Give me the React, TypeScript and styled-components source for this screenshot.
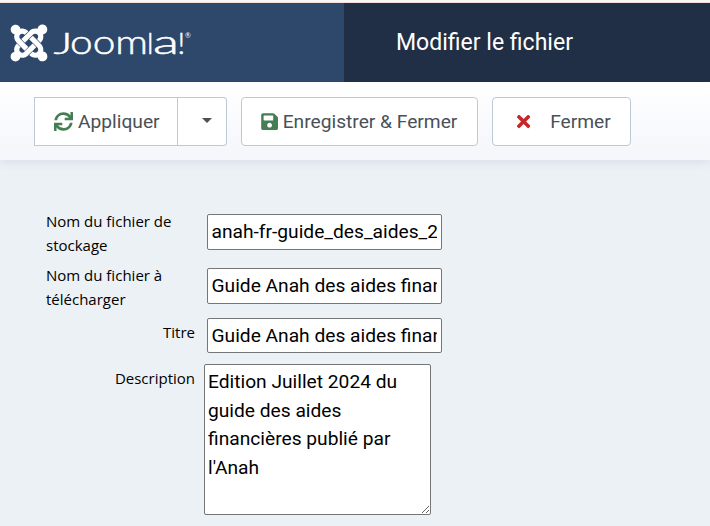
import React from "react";
import styled, { createGlobalStyle } from "styled-components";
import { FaJoomla, FaSync, FaSave, FaTimes } from "react-icons/fa";

const GlobalStyle = createGlobalStyle`
  * { box-sizing: border-box; }
  body {
    margin: 0;
    background: #ecf1f5;
    font-family: Roboto, "Liberation Sans", sans-serif;
    overflow: hidden;
  }
`;

const Page = styled.div`
  height: 526px;
  overflow: hidden;
  border-top: 2px solid #f8f8f8;
`;

const Header = styled.header`
  display: flex;
  height: 80px;
  border-top: 1px solid #f6dcdb;
  background: #212f46;
`;

const Brand = styled.div`
  display: flex;
  align-items: flex-start;
  width: 344px;
  padding: 19px 0 0 9px;
  background: #2e486b;
  color: #fff;
`;

const Mark = styled(FaJoomla)`
  width: 40px;
  height: 42px;
`;

const Wordmark = styled.svg`
  width: 145px;
  height: 42px;
  font-family: Lato, sans-serif;
  font-weight: 300;
  fill: #fff;
  overflow: visible;
`;

const Title = styled.h1`
  margin: 0;
  padding: 0 0 0 52px;
  font-size: 23.04px;
  font-weight: 400;
  line-height: 80px;
  color: #fff;
`;

const Toolbar = styled.div`
  display: flex;
  align-items: flex-start;
  gap: 14px;
  height: 78px;
  padding: 15px 34px;
  background: linear-gradient(#fff, #f4f6fb);
  box-shadow: 0 2px 10px rgba(40, 80, 130, 0.11);
`;

const Group = styled.div`
  display: flex;
`;

const Button = styled.button<{ $w: number; $gap: number; $pad: number; $radius?: string }>`
  display: flex;
  flex: none;
  align-items: center;
  gap: ${(p) => p.$gap}px;
  width: ${(p) => p.$w}px;
  height: 49px;
  padding: 0 0 0 ${(p) => p.$pad}px;
  border: 1px solid #bfc8d8;
  border-radius: ${(p) => p.$radius ?? "4px"};
  background: #fff;
  color: #495057;
  font: 400 19.2px Roboto, sans-serif;
  white-space: nowrap;
  svg { flex: none; }
`;

const SplitToggle = styled(Button)`
  border-left: 0;
`;

const Caret = styled.span`
  margin-bottom: 2px;
  border: 5px solid transparent;
  border-top-color: #495057;
  border-bottom: 0;
`;

const Form = styled.form`
  display: grid;
  grid-template-columns: 149px 235px;
  grid-template-rows: 54px 54px 46px 152px;
  column-gap: 12px;
  padding: 50px 0 0 46px;
`;

const Label = styled.label<{ $right?: boolean }>`
  margin-top: ${(p) => (p.$right ? 2 : -1)}px;
  font: 400 15px/24px "Open Sans", "Noto Sans", sans-serif;
  text-align: ${(p) => (p.$right ? "right" : "left")};
  color: #000;
  white-space: nowrap;
`;

const LabelText = styled.span`
  display: block;
`;

const Input = styled.input<{ $top?: number; $h?: number }>`
  width: 235px;
  height: ${(p) => p.$h ?? 36}px;
  margin-top: ${(p) => p.$top ?? 4}px;
  padding: 0 4px ${(p) => (p.$h ? 0 : 2)}px 3.5px;
  border: 1px solid #767676;
  border-radius: 2px;
  background: #fff;
  color: #000;
  font: 400 19.2px Roboto, sans-serif;
`;

const TextArea = styled.textarea`
  width: 227px;
  height: 151px;
  margin-left: -3px;
  padding: 3px 3px 2px;
  border: 1px solid #767676;
  border-radius: 2px;
  background: #fff;
  color: #000;
  font: 400 19.2px/28.6px Roboto, sans-serif;
  resize: both;
  overflow: hidden;
`;

export default function App() {
  return (
    <Page>
      <GlobalStyle />
      <Header>
        <Brand>
          <Mark />
          <Wordmark viewBox="0 0 145 42" role="img" aria-label="Joomla!">
            <g stroke="#fff" strokeWidth="0.5">
              <text x="4.5" y="31.5" fontSize="30" textLength="19" lengthAdjust="spacingAndGlyphs">J</text>
              <text x="21" y="31.5" fontSize="34" textLength="78" lengthAdjust="spacingAndGlyphs">oom</text>
              <text x="98" y="31.5" fontSize="29">l</text>
              <text x="104" y="31.5" fontSize="34" textLength="26" lengthAdjust="spacingAndGlyphs">a</text>
              <text x="128.5" y="31.5" fontSize="30">!</text>
            </g>
            <text x="136" y="15.5" fontSize="7" fontWeight="400">®</text>
          </Wordmark>
        </Brand>
        <Title>Modifier le fichier</Title>
      </Header>
      <Toolbar>
        <Group>
          <Button $w={144} $gap={5} $pad={19} $radius="0">
            <FaSync size={19} color="#457d54" />
            Appliquer
          </Button>
          <SplitToggle $w={49} $gap={0} $pad={24} $radius="0 4px 4px 0" aria-label="Plus">
            <Caret />
          </SplitToggle>
        </Group>
        <Button $w={237} $gap={3.5} $pad={18}>
          <FaSave size={19.2} color="#457d54" />
          Enregistrer &amp; Fermer
        </Button>
        <Button $w={139} $gap={17} $pad={21}>
          <FaTimes size={19.2} color="#c52827" />
          Fermer
        </Button>
      </Toolbar>
      <Form>
        <Label>
          <LabelText>Nom du fichier de</LabelText>
          <LabelText>stockage</LabelText>
        </Label>
        <Input defaultValue="anah-fr-guide_des_aides_2024" />
        <Label>
          <LabelText>Nom du fichier à</LabelText>
          <LabelText>télécharger</LabelText>
        </Label>
        <Input defaultValue="Guide Anah des aides financières" />
        <Label $right>
          <LabelText>Titre</LabelText>
        </Label>
        <Input $top={0} $h={35} defaultValue="Guide Anah des aides financières" />
        <Label $right>
          <LabelText>Description</LabelText>
        </Label>
        <TextArea defaultValue={"Edition Juillet 2024 du guide des aides financières publié par l'Anah"} />
      </Form>
    </Page>
  );
}
